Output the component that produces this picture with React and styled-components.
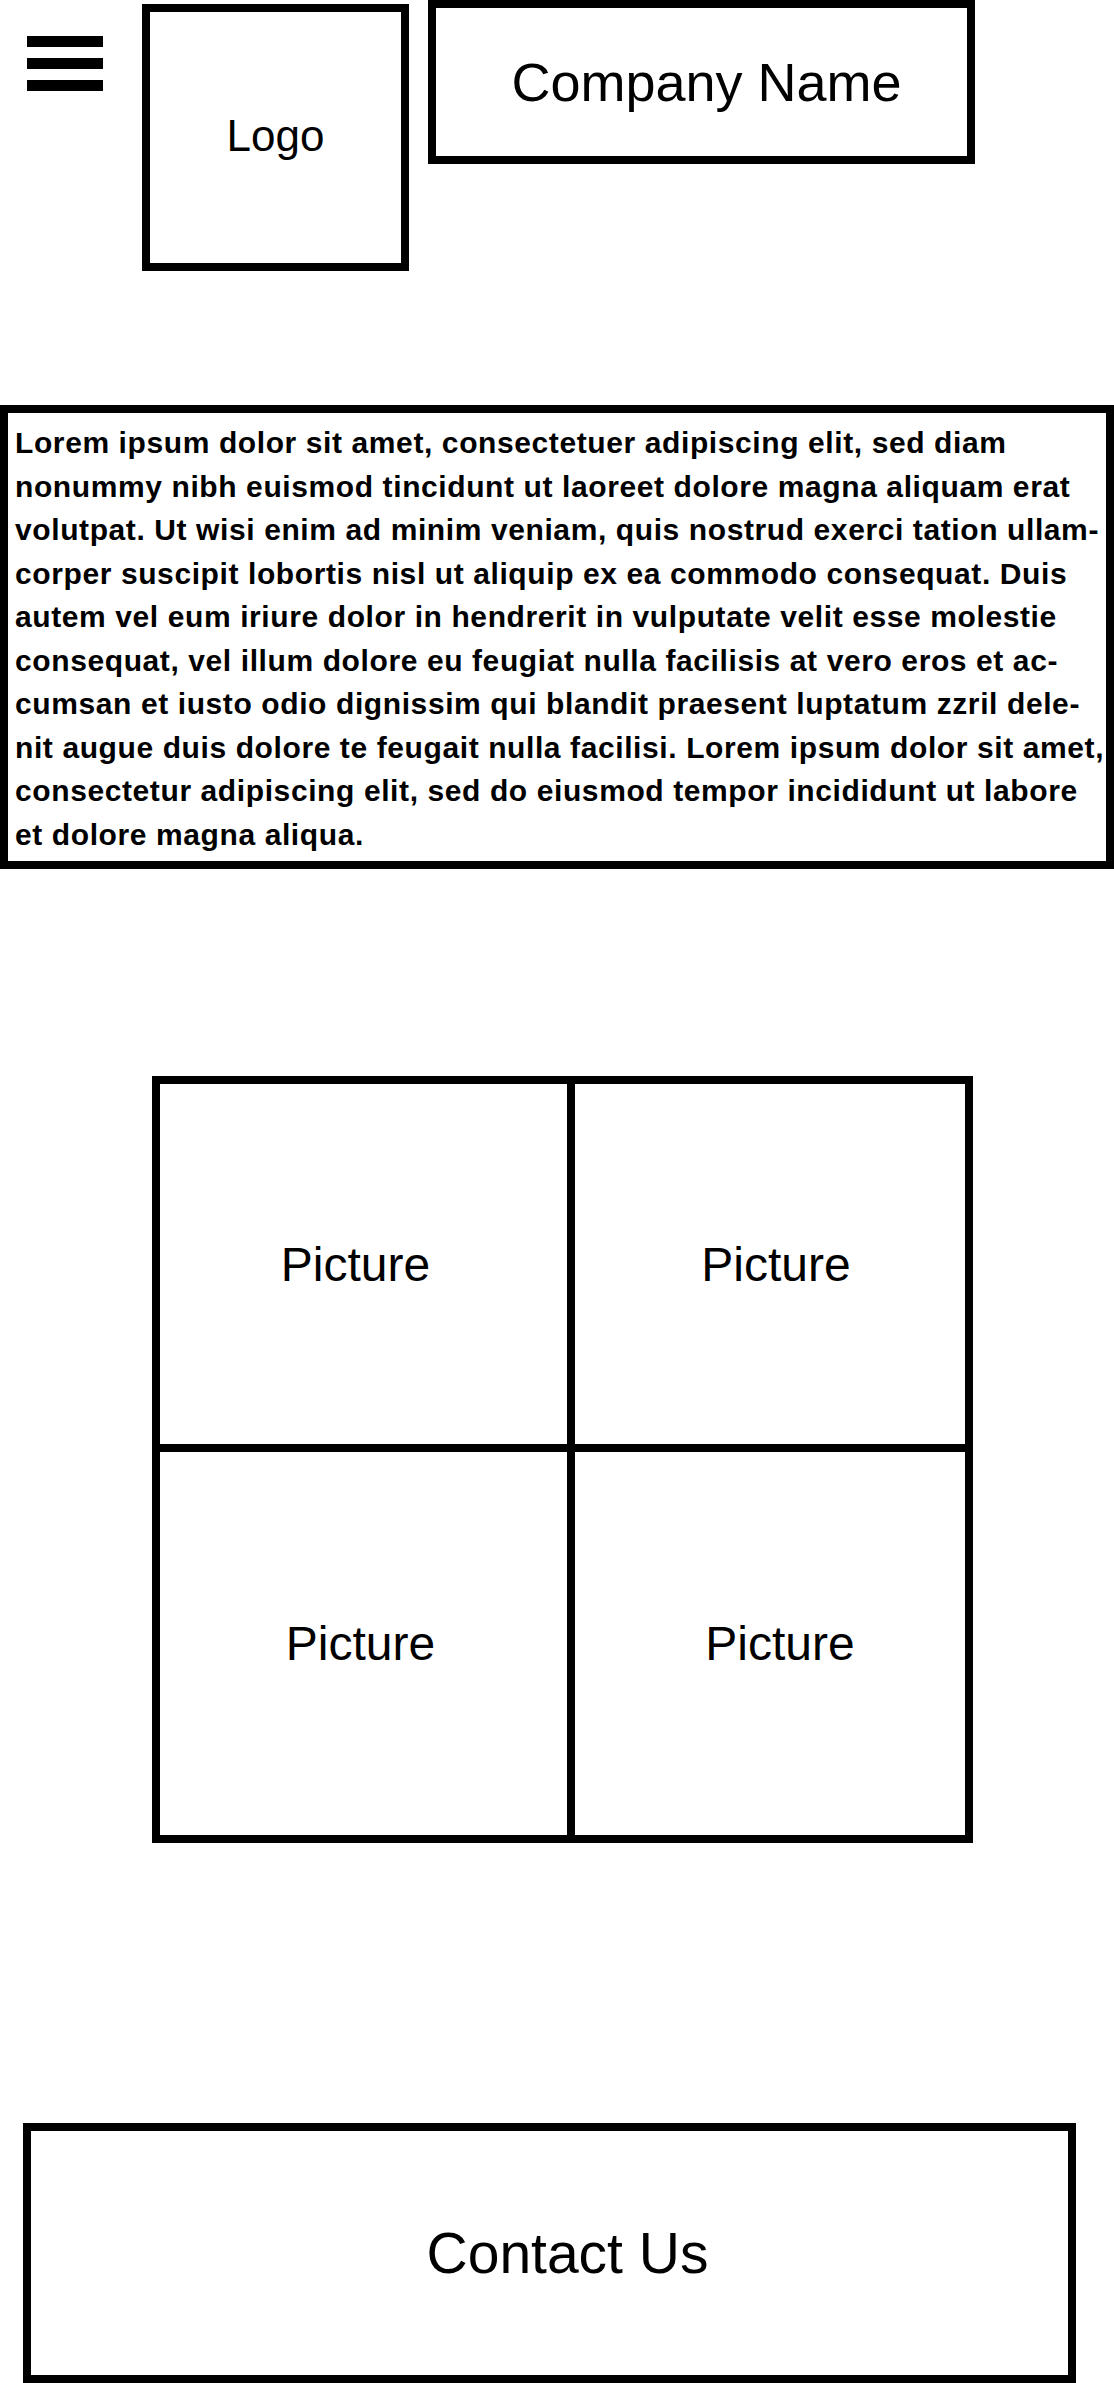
import React from 'react';
import styled, { createGlobalStyle } from 'styled-components';

const GlobalStyle = createGlobalStyle`
    html, body {
        margin: 0;
        padding: 0;
        background: #ffffff;
    }
    body {
        font-family: "Liberation Sans", Arial, sans-serif;
        color: #000000;
    }
`;

const lines = [
    'Lorem ipsum dolor sit amet, consectetuer adipiscing elit, sed diam',
    'nonummy nibh euismod tincidunt ut laoreet dolore magna aliquam erat',
    'volutpat. Ut wisi enim ad minim veniam, quis nostrud exerci tation ullam-',
    'corper suscipit lobortis nisl ut aliquip ex ea commodo consequat. Duis',
    'autem vel eum iriure dolor in hendrerit in vulputate velit esse molestie',
    'consequat, vel illum dolore eu feugiat nulla facilisis at vero eros et ac-',
    'cumsan et iusto odio dignissim qui blandit praesent luptatum zzril dele-',
    'nit augue duis dolore te feugait nulla facilisi. Lorem ipsum dolor sit amet,',
    'consectetur adipiscing elit, sed do eiusmod tempor incididunt ut labore',
    'et dolore magna aliqua.',
];

// small nudges so the labels sit where they do in the mockup
const pictures = [-8, 6, -3, 10];

const App = () => {
    return (
        <Page>
            <GlobalStyle />
            <Header>
                <Burger aria-label="menu">
                    <span />
                    <span />
                    <span />
                </Burger>
                <LogoBox>Logo</LogoBox>
                <NameBox>Company Name</NameBox>
            </Header>

            <TextBox>
                {lines.map((line) => (
                    <Line key={line}>{line}</Line>
                ))}
            </TextBox>

            <Gallery>
                {pictures.map((shift, i) => (
                    <Cell key={i} $shift={shift}>
                        Picture
                    </Cell>
                ))}
            </Gallery>

            <ContactBox>Contact Us</ContactBox>
        </Page>
    );
};

export default App;

// Styled Components
const Page = styled.div`
    width: 1114px;
    min-height: 2383px;
    display: flex;
    flex-direction: column;
`;

const Header = styled.header`
    display: flex;
    align-items: flex-start;
    height: 271px;
`;

const Burger = styled.div`
    display: flex;
    flex-direction: column;
    gap: 11px;
    margin: 36px 0 0 27px;
    span {
        display: block;
        width: 76px;
        height: 11px;
        background: #000;
    }
`;

const LogoBox = styled.div`
    box-sizing: border-box;
    width: 267px;
    height: 267px;
    margin: 4px 0 0 39px;
    border: 8px solid #000;
    display: flex;
    align-items: center;
    justify-content: center;
    font-size: 44px;
    padding-bottom: 4px;
`;

const NameBox = styled.div`
    box-sizing: border-box;
    width: 547px;
    height: 164px;
    margin-left: 19px;
    border: 8px solid #000;
    display: flex;
    align-items: center;
    justify-content: center;
    font-size: 54px;
    padding-left: 10px;
`;

const TextBox = styled.div`
    box-sizing: border-box;
    width: 1114px;
    height: 464px;
    margin-top: 134px;
    border: 8px solid #000;
    padding: 8px 0 0 7px;
    font-size: 30px;
    font-weight: 700;
    line-height: 43.5px;
    letter-spacing: 0.6px;
`;

const Line = styled.div`
    white-space: nowrap;
`;

const Gallery = styled.div`
    display: grid;
    grid-template-columns: 407px 390px;
    grid-template-rows: 360px 383px;
    gap: 8px;
    width: fit-content;
    margin: 207px 0 0 152px;
    border: 8px solid #000;
    background: #000;
`;

const Cell = styled.div`
    background: #fff;
    display: flex;
    align-items: center;
    justify-content: center;
    font-size: 48px;
    padding-left: ${({ $shift }) => Math.max($shift, 0) * 2}px;
    padding-right: ${({ $shift }) => Math.max(-$shift, 0) * 2}px;
`;

const ContactBox = styled.div`
    box-sizing: border-box;
    width: 1053px;
    height: 260px;
    margin: 280px 0 0 23px;
    border: 8px solid #000;
    display: flex;
    align-items: center;
    justify-content: center;
    font-size: 57px;
    padding-left: 36px;
`;
